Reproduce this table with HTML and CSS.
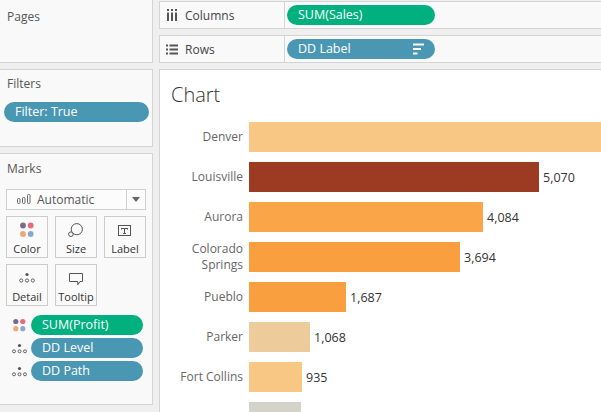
FILE: index.html
```html
<!DOCTYPE html>
<html>
<head>
<meta charset="utf-8">
<link rel="stylesheet" href="styles.css">
</head>
<body>
<div class="app">
  <div class="side">
    <section class="card pages"><h3 class="title">Pages</h3></section>
    <section class="card filters">
      <h3 class="title">Filters</h3>
      <div class="pill teal filter-pill">Filter: True</div>
    </section>
    <section class="card marks">
      <h3 class="title">Marks</h3>
      <div class="dropdown">
        <div class="dd-main">
          <svg class="dd-icon" width="14" height="10" viewBox="0 0 14 10"><g fill="none" stroke="#666" stroke-width="1"><rect x="0.5" y="4.5" width="2.5" height="5" rx="1"/><rect x="5.5" y="3.5" width="2.5" height="6" rx="1"/><rect x="10.5" y="0.5" width="2.5" height="9" rx="1"/></g></svg>
          <span>Automatic</span>
        </div>
        <div class="dd-arrow"><svg width="8" height="5" viewBox="0 0 8 5"><path d="M0 0H8L4 5Z" fill="#666"/></svg></div>
      </div>
      <div class="mark-grid">
        <div class="mark-btn">
          <svg class="mark-icon" width="18" height="19" viewBox="0 0 18 19"><circle cx="5" cy="3.5" r="2.9" fill="#7a6a8e"/><circle cx="12.7" cy="3.5" r="2.9" fill="#ea6a7c"/><circle cx="5" cy="12" r="2.9" fill="#f2a673"/><circle cx="12.7" cy="12" r="2.9" fill="#8ba7ce"/></svg>
          <span>Color</span>
        </div>
        <div class="mark-btn">
          <svg class="mark-icon" width="18" height="19" viewBox="0 0 18 19"><circle cx="9.8" cy="7.2" r="5.6" fill="none" stroke="#555" stroke-width="1"/><circle cx="3.9" cy="12.2" r="2.3" fill="#fafafa" stroke="#555" stroke-width="1"/></svg>
          <span>Size</span>
        </div>
        <div class="mark-btn">
          <svg class="mark-icon" width="18" height="19" viewBox="0 0 18 19"><rect x="2.5" y="3.5" width="12" height="10" fill="none" stroke="#555" stroke-width="1"/><path d="M5.5 6.5H11.5M8.5 6.5V11.5M7 11.5H10M5.5 6V7.5M11.5 6V7.5" fill="none" stroke="#555" stroke-width="1"/></svg>
          <span>Label</span>
        </div>
        <div class="mark-btn">
          <svg class="mark-icon" width="18" height="19" viewBox="0 0 18 19"><circle cx="9" cy="4.5" r="1.6" fill="#555"/><g fill="none" stroke="#555" stroke-width="0.9"><circle cx="3.2" cy="10.5" r="1.6"/><circle cx="9" cy="10.5" r="1.6"/><circle cx="14.8" cy="10.5" r="1.6"/></g></svg>
          <span>Detail</span>
        </div>
        <div class="mark-btn">
          <svg class="mark-icon" width="18" height="19" viewBox="0 0 18 19"><path d="M2.5 3.5H15.5V11.5H13L10.8 14.8V11.5H2.5Z" fill="none" stroke="#555" stroke-width="1" stroke-linejoin="round"/></svg>
          <span>Tooltip</span>
        </div>
      </div>
      <div class="mark-pills">
        <div class="mp-row">
          <svg class="mp-icon" width="15" height="15" viewBox="0 0 15 15"><circle cx="3.8" cy="3.5" r="2.6" fill="#7a6a8e"/><circle cx="10.8" cy="3.5" r="2.6" fill="#ea6a7c"/><circle cx="3.8" cy="10.7" r="2.6" fill="#f2a673"/><circle cx="10.8" cy="10.7" r="2.6" fill="#8ba7ce"/></svg>
          <div class="pill green mp-pill">SUM(Profit)</div>
        </div>
        <div class="mp-row">
          <svg class="mp-icon" width="15" height="15" viewBox="0 0 15 15"><circle cx="7.5" cy="4.5" r="1.6" fill="#555"/><g fill="none" stroke="#555" stroke-width="0.9"><circle cx="2" cy="10.3" r="1.5"/><circle cx="7.5" cy="10.3" r="1.5"/><circle cx="13" cy="10.3" r="1.5"/></g></svg>
          <div class="pill teal mp-pill">DD Level</div>
        </div>
        <div class="mp-row">
          <svg class="mp-icon" width="15" height="15" viewBox="0 0 15 15"><circle cx="7.5" cy="4.5" r="1.6" fill="#555"/><g fill="none" stroke="#555" stroke-width="0.9"><circle cx="2" cy="10.3" r="1.5"/><circle cx="7.5" cy="10.3" r="1.5"/><circle cx="13" cy="10.3" r="1.5"/></g></svg>
          <div class="pill teal mp-pill">DD Path</div>
        </div>
      </div>
    </section>
  </div>

  <div class="main">
    <div class="shelf">
      <div class="shelf-label">
        <svg class="shelf-icon" width="12" height="12" viewBox="0 0 12 12"><g fill="#555"><rect x="1" y="0" width="2" height="2"/><rect x="1" y="3.5" width="2" height="8.5"/><rect x="5" y="0" width="2" height="2"/><rect x="5" y="3.5" width="2" height="8.5"/><rect x="9" y="0" width="2" height="2"/><rect x="9" y="3.5" width="2" height="8.5"/></g></svg>
        <span>Columns</span>
      </div>
      <div class="shelf-body"><div class="pill green shelf-pill">SUM(Sales)</div></div>
    </div>
    <div class="shelf">
      <div class="shelf-label">
        <svg class="shelf-icon" width="12" height="11" viewBox="0 0 12 11"><g fill="#555"><rect x="0" y="0.5" width="2" height="2"/><rect x="3.5" y="0.5" width="8.5" height="2"/><rect x="0" y="4.5" width="2" height="2"/><rect x="3.5" y="4.5" width="8.5" height="2"/><rect x="0" y="8.5" width="2" height="2"/><rect x="3.5" y="8.5" width="8.5" height="2"/></g></svg>
        <span>Rows</span>
      </div>
      <div class="shelf-body">
        <div class="pill teal shelf-pill">
          <span class="pill-text">DD Label</span>
          <svg class="sort-icon" width="11" height="12" viewBox="0 0 11 12"><g fill="#fff"><rect x="0" y="0.5" width="11" height="2"/><rect x="0" y="5" width="8" height="2"/><rect x="0" y="9.5" width="4.5" height="2"/></g></svg>
        </div>
      </div>
    </div>
    <div class="card chart">
      <h2 class="chart-title">Chart</h2>
      <div class="rows">
        <div class="row"><div class="row-label">Denver</div><div class="bar c-light" style="width:400px"></div></div>
        <div class="row"><div class="row-label">Louisville</div><div class="bar c-dark" style="width:290px"></div><span class="value">5,070</span></div>
        <div class="row"><div class="row-label">Aurora</div><div class="bar c-orange" style="width:234px"></div><span class="value">4,084</span></div>
        <div class="row"><div class="row-label">Colorado<br>Springs</div><div class="bar c-orange2" style="width:211px"></div><span class="value">3,694</span></div>
        <div class="row"><div class="row-label">Pueblo</div><div class="bar c-orange2" style="width:97px"></div><span class="value">1,687</span></div>
        <div class="row"><div class="row-label">Parker</div><div class="bar c-tan" style="width:61px"></div><span class="value">1,068</span></div>
        <div class="row"><div class="row-label">Fort Collins</div><div class="bar c-light" style="width:53px"></div><span class="value">935</span></div>
        <div class="row"><div class="row-label"></div><div class="bar c-gray" style="width:52px"></div></div>
      </div>
    </div>
  </div>
</div>
</body>
</html>
```

FILE: styles.css
```css
* { box-sizing: border-box; }

html, body {
  margin: 0;
  width: 601px;
  height: 412px;
  overflow: hidden;
}

body {
  background: #efefef;
  font-family: "Open Sans", "Noto Sans", sans-serif;
  color: #333;
}

.app {
  display: grid;
  grid-template-columns: 153px 470px;
  column-gap: 6px;
  margin-top: -1px;
}

.side {
  display: flex;
  flex-direction: column;
  gap: 6px;
}

.card {
  background: #f9f9f9;
  border: 1px solid #d4d4d4;
  border-left: none;
}

.title {
  margin: 0;
  font-size: 12px;
  line-height: 16px;
  font-weight: 400;
  color: #555;
}

.pages {
  height: 64px;
  padding: 9px 6px 0 7px;
}

.filters {
  height: 78px;
  padding: 6px 4px 0 4px;
}

.filters .title {
  padding-left: 3px;
}

.marks {
  height: 252px;
  padding: 7px 6px 0 6px;
}

.marks .title {
  padding-left: 1px;
}

.pill {
  height: 20px;
  border-radius: 10px;
  color: #fff;
  font-size: 12.5px;
  line-height: 20px;
  padding-left: 11px;
  display: flex;
  align-items: center;
  white-space: nowrap;
}

.teal { background: #4a97b3; }
.green { background: #00b07f; }

.filter-pill {
  margin-top: 10px;
  width: 145px;
}

.dropdown {
  margin-top: 12px;
  height: 21px;
  border: 1px solid #cfcfcf;
  background: #fcfcfc;
  display: flex;
}

.dd-main {
  flex: 1;
  display: flex;
  align-items: center;
  padding-left: 10px;
  gap: 6px;
  font-size: 12px;
  color: #555;
}

.dd-icon { margin-top: -1px; }

.dd-arrow {
  width: 19px;
  border-left: 1px solid #cfcfcf;
  display: flex;
  align-items: center;
  justify-content: center;
}

.mark-grid {
  display: grid;
  grid-template-columns: repeat(3, 42px);
  grid-auto-rows: 42px;
  column-gap: 7px;
  row-gap: 6px;
  margin-top: 6px;
}

.mark-btn {
  border: 1px solid #cccccc;
  background: #fafafa;
  display: flex;
  flex-direction: column;
  align-items: center;
  padding-top: 5px;
  font-size: 11px;
  line-height: 15px;
  color: #333;
}

.mark-icon {
  display: block;
  flex: none;
}

.mark-pills {
  margin-top: 9px;
  display: flex;
  flex-direction: column;
  gap: 3px;
}

.mp-row {
  display: flex;
  align-items: center;
  padding-left: 6px;
  gap: 4px;
}

.mp-icon { flex: none; }

.mp-pill {
  width: 112px;
  padding-left: 11px;
}

.main {
  padding-top: 2px;
  display: flex;
  flex-direction: column;
  gap: 6px;
}

.shelf {
  height: 28px;
  display: flex;
  background: #f9f9f9;
  border: 1px solid #d4d4d4;
  border-right: none;
}

.shelf-label {
  width: 125px;
  border-right: 1px solid #d4d4d4;
  display: flex;
  align-items: center;
  padding-left: 6px;
  gap: 7px;
  font-size: 12px;
  color: #444;
}

.shelf-icon { flex: none; }

.shelf-body {
  display: flex;
  align-items: center;
  padding: 0 2px;
}

.shelf-pill {
  width: 148px;
  padding-right: 11px;
}

.pill-text { flex: 1; }

.chart {
  height: 400px;
  background: #ffffff;
  border-right: none;
  border-left: 1px solid #d4d4d4;
  padding-top: 11px;
}

.chart-title {
  margin: 0 0 14px 0;
  padding-left: 11px;
  font-size: 20px;
  line-height: 27px;
  font-weight: 300;
  color: #333;
}

.rows {
  display: flex;
  flex-direction: column;
  gap: 10px;
}

.row {
  display: flex;
  align-items: center;
  height: 30px;
}

.row-label {
  width: 83px;
  margin-right: 6px;
  flex: none;
  text-align: right;
  font-size: 12px;
  line-height: 16px;
  color: #666;
}

.bar {
  height: 30px;
  flex: none;
}

.value {
  margin-left: 4px;
  font-size: 12.5px;
  color: #333;
  white-space: nowrap;
}

.c-light { background: #f9c784; }
.c-dark { background: #9d3a22; }
.c-orange { background: #faa548; }
.c-orange2 { background: #f99f3f; }
.c-tan { background: #eecb9a; }
.c-gray { background: #d3d3ca; }
```
